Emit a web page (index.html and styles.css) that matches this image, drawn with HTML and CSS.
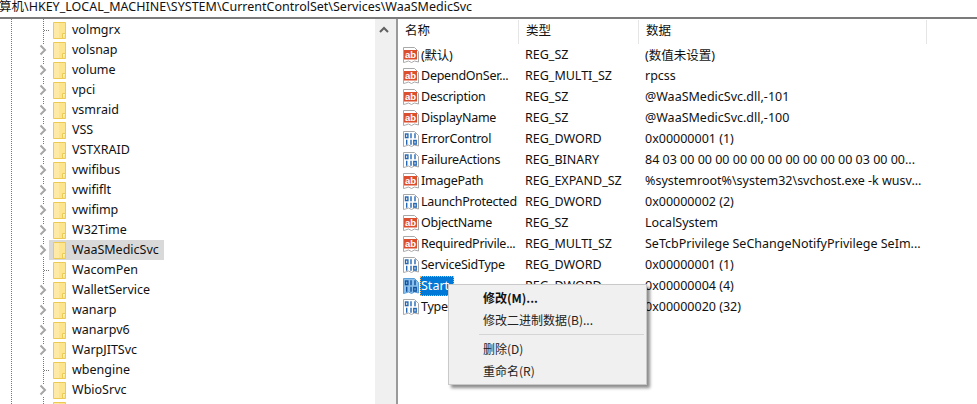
FILE: index.html
```html
<!DOCTYPE html>
<html lang="zh">
<head>
<meta charset="utf-8">
<title>注册表编辑器</title>
<link rel="stylesheet" href="styles.css">
</head>
<body>
<svg class="defs" width="0" height="0" aria-hidden="true">
  <symbol id="folder" viewBox="0 0 13 17">
    <path d="M.5.5h12v16H.5z" fill="#fde58f" stroke="#eccb55"/>
    <path d="M1 1h5v15H1z" fill="#fee9a6"/>
    <path d="M9.5 16.5v-5h3" fill="#fff3c4" stroke="#eccb55"/>
  </symbol>
  <symbol id="chev" viewBox="0 0 8 12">
    <path d="M1.5 1.5 6 6l-4.500 4.500" fill="none" stroke="#a6a6a6" stroke-width="2"/>
  </symbol>
  <symbol id="sz" viewBox="0 0 16 16">
    <path d="M.5.500h11l4 4v10.500l-4-1-3 1.500-3-1.500-3 1-2 .500z" fill="#fff" stroke="#a9a9a9"/>
    <rect x="1" y="3" width="13" height="9.500" fill="#dc4f2e"/>
    <text x="7.500" y="10.700" class="ab">ab</text>
  </symbol>
  <symbol id="bin" viewBox="0 0 16 16">
    <path d="M.5.500h11l4 4v10.500l-4-1-3 1.500-3-1.500-3 1-2 .500z" fill="#fff" stroke="#a9a9a9"/>
    <g fill="none" stroke="#2468b4" stroke-width="1.400">
      <rect x="2.500" y="3" width="2.400" height="3.600"/>
      <path d="M8 2.300v5M12 2.300v5M3.700 8.800v5M8 8.800v5"/>
      <rect x="10.800" y="9.500" width="2.400" height="3.600"/>
    </g>
  </symbol>
  <symbol id="bin-sel" viewBox="0 0 16 16">
    <path d="M.5.500h11l4 4v10.500l-4-1-3 1.500-3-1.500-3 1-2 .500z" fill="#8cc0ec" stroke="#5a9fd8"/>
    <g fill="none" stroke="#0f4f9c" stroke-width="1.400">
      <rect x="2.500" y="3" width="2.400" height="3.600"/>
      <path d="M8 2.300v5M12 2.300v5M3.700 8.800v5M8 8.800v5"/>
      <rect x="10.800" y="9.500" width="2.400" height="3.600"/>
    </g>
  </symbol>
</svg>

<div class="app">
  <div class="path">算机\HKEY_LOCAL_MACHINE\SYSTEM\CurrentControlSet\Services\WaaSMedicSvc</div>
  <div class="panes">
    <div class="tree-pane">
      <ul class="tree">
        <li class="node leaf"><span class="tw"></span><svg class="fold"><use href="#folder"/></svg><span class="lbl">volmgrx</span></li>
        <li class="node"><span class="tw"><svg class="chev"><use href="#chev"/></svg></span><svg class="fold"><use href="#folder"/></svg><span class="lbl">volsnap</span></li>
        <li class="node"><span class="tw"><svg class="chev"><use href="#chev"/></svg></span><svg class="fold"><use href="#folder"/></svg><span class="lbl">volume</span></li>
        <li class="node"><span class="tw"><svg class="chev"><use href="#chev"/></svg></span><svg class="fold"><use href="#folder"/></svg><span class="lbl">vpci</span></li>
        <li class="node"><span class="tw"><svg class="chev"><use href="#chev"/></svg></span><svg class="fold"><use href="#folder"/></svg><span class="lbl">vsmraid</span></li>
        <li class="node"><span class="tw"><svg class="chev"><use href="#chev"/></svg></span><svg class="fold"><use href="#folder"/></svg><span class="lbl">VSS</span></li>
        <li class="node"><span class="tw"><svg class="chev"><use href="#chev"/></svg></span><svg class="fold"><use href="#folder"/></svg><span class="lbl">VSTXRAID</span></li>
        <li class="node"><span class="tw"><svg class="chev"><use href="#chev"/></svg></span><svg class="fold"><use href="#folder"/></svg><span class="lbl">vwifibus</span></li>
        <li class="node"><span class="tw"><svg class="chev"><use href="#chev"/></svg></span><svg class="fold"><use href="#folder"/></svg><span class="lbl">vwififlt</span></li>
        <li class="node"><span class="tw"><svg class="chev"><use href="#chev"/></svg></span><svg class="fold"><use href="#folder"/></svg><span class="lbl">vwifimp</span></li>
        <li class="node"><span class="tw"><svg class="chev"><use href="#chev"/></svg></span><svg class="fold"><use href="#folder"/></svg><span class="lbl">W32Time</span></li>
        <li class="node sel"><span class="tw"><svg class="chev"><use href="#chev"/></svg></span><svg class="fold"><use href="#folder"/></svg><span class="lbl">WaaSMedicSvc</span></li>
        <li class="node leaf"><span class="tw"></span><svg class="fold"><use href="#folder"/></svg><span class="lbl">WacomPen</span></li>
        <li class="node"><span class="tw"><svg class="chev"><use href="#chev"/></svg></span><svg class="fold"><use href="#folder"/></svg><span class="lbl">WalletService</span></li>
        <li class="node"><span class="tw"><svg class="chev"><use href="#chev"/></svg></span><svg class="fold"><use href="#folder"/></svg><span class="lbl">wanarp</span></li>
        <li class="node"><span class="tw"><svg class="chev"><use href="#chev"/></svg></span><svg class="fold"><use href="#folder"/></svg><span class="lbl">wanarpv6</span></li>
        <li class="node"><span class="tw"><svg class="chev"><use href="#chev"/></svg></span><svg class="fold"><use href="#folder"/></svg><span class="lbl">WarpJITSvc</span></li>
        <li class="node leaf"><span class="tw"></span><svg class="fold"><use href="#folder"/></svg><span class="lbl">wbengine</span></li>
        <li class="node"><span class="tw"><svg class="chev"><use href="#chev"/></svg></span><svg class="fold"><use href="#folder"/></svg><span class="lbl">WbioSrvc</span></li>
        <li class="node"><span class="tw"></span><svg class="fold"><use href="#folder"/></svg></li>
      </ul>
      <div class="scrollbar"><svg class="up" width="10" height="7" viewBox="0 0 10 7"><path d="M1 6 5 2l4 4" fill="none" stroke="#606060" stroke-width="2"/></svg></div>
    </div>
    <div class="split"></div>
    <div class="list-pane">
      <div class="head"><span class="h h1">名称</span><span class="h h2">类型</span><span class="h h3">数据</span><span class="h h4"></span></div>
      <div class="rows">
        <div class="row"><span class="name"><svg class="ico"><use href="#sz"/></svg><span class="nm">(默认)</span></span><span class="type">REG_SZ</span><span class="data">(数值未设置)</span></div>
        <div class="row"><span class="name"><svg class="ico"><use href="#sz"/></svg><span class="nm">DependOnSer...</span></span><span class="type">REG_MULTI_SZ</span><span class="data">rpcss</span></div>
        <div class="row"><span class="name"><svg class="ico"><use href="#sz"/></svg><span class="nm">Description</span></span><span class="type">REG_SZ</span><span class="data">@WaaSMedicSvc.dll,-101</span></div>
        <div class="row"><span class="name"><svg class="ico"><use href="#sz"/></svg><span class="nm">DisplayName</span></span><span class="type">REG_SZ</span><span class="data">@WaaSMedicSvc.dll,-100</span></div>
        <div class="row"><span class="name"><svg class="ico"><use href="#bin"/></svg><span class="nm">ErrorControl</span></span><span class="type">REG_DWORD</span><span class="data">0x00000001 (1)</span></div>
        <div class="row"><span class="name"><svg class="ico"><use href="#bin"/></svg><span class="nm">FailureActions</span></span><span class="type">REG_BINARY</span><span class="data">84 03 00 00 00 00 00 00 00 00 00 00 03 00 00...</span></div>
        <div class="row"><span class="name"><svg class="ico"><use href="#sz"/></svg><span class="nm">ImagePath</span></span><span class="type">REG_EXPAND_SZ</span><span class="data">%systemroot%\system32\svchost.exe -k wusv...</span></div>
        <div class="row"><span class="name"><svg class="ico"><use href="#bin"/></svg><span class="nm">LaunchProtected</span></span><span class="type">REG_DWORD</span><span class="data">0x00000002 (2)</span></div>
        <div class="row"><span class="name"><svg class="ico"><use href="#sz"/></svg><span class="nm">ObjectName</span></span><span class="type">REG_SZ</span><span class="data">LocalSystem</span></div>
        <div class="row"><span class="name"><svg class="ico"><use href="#sz"/></svg><span class="nm">RequiredPrivile...</span></span><span class="type">REG_MULTI_SZ</span><span class="data">SeTcbPrivilege SeChangeNotifyPrivilege SeIm...</span></div>
        <div class="row"><span class="name"><svg class="ico"><use href="#bin"/></svg><span class="nm">ServiceSidType</span></span><span class="type">REG_DWORD</span><span class="data">0x00000001 (1)</span></div>
        <div class="row"><span class="name"><svg class="ico"><use href="#bin-sel"/></svg><span class="nm nm-sel">Start</span></span><span class="type">REG_DWORD</span><span class="data">0x00000004 (4)</span></div>
        <div class="row"><span class="name"><svg class="ico"><use href="#bin"/></svg><span class="nm">Type</span></span><span class="type">REG_DWORD</span><span class="data">0x00000020 (32)</span></div>
      </div>
    </div>
  </div>
  <div class="menu">
    <div class="mi strong">修改(M)...</div>
    <div class="mi">修改二进制数据(B)...</div>
    <div class="sep"></div>
    <div class="mi">删除(D)</div>
    <div class="mi">重命名(R)</div>
  </div>
</div>
</body>
</html>
```

FILE: styles.css
```css
* { box-sizing: border-box; }
html, body { margin: 0; height: 100%; overflow: hidden; background: #fff; }
body {
  font-family: "Noto Sans", "Noto Sans CJK SC", sans-serif;
  font-size: 12.5px;
  color: #111;
}
.defs { position: absolute; }
.ab { font: bold 9.5px "Liberation Sans", sans-serif; fill: #fff; text-anchor: middle; }

.app { position: relative; width: 977px; height: 404px; overflow: hidden; }

.path {
  height: 19px;
  line-height: 14px;
  font-size: 12.5px;
  white-space: nowrap;
  overflow: hidden;
  text-indent: -1px;
  border-bottom: 2px solid #7b7b7b;
}

.panes { display: flex; height: 385px; }

/* tree */
.tree-pane { width: 392px; flex: none; display: flex; overflow: hidden; }
.tree {
  list-style: none;
  margin: 0;
  padding: 1px 0 0;
  width: 375px;
  flex: none;
  background-image:
    repeating-linear-gradient(to bottom, #777 0 1px, transparent 1px 2px),
    repeating-linear-gradient(to bottom, #777 0 1px, transparent 1px 2px);
  background-size: 1px 100%, 1px 100%;
  background-position: 11px 0, 43px 0;
  background-repeat: no-repeat;
}
.node {
  height: 20px;
  display: flex;
  align-items: center;
  position: relative;
}
.tw {
  width: 53px;
  height: 20px;
  flex: none;
  display: flex;
  justify-content: flex-end;
  align-items: center;
  padding-right: 6px;
}
.chev { width: 8px; height: 12px; background: #fff; }
.leaf .tw {
  background: repeating-linear-gradient(to right, #777 0 1px, transparent 1px 2px) 44px 10px / 6px 1px no-repeat;
}
.fold { width: 13px; height: 17px; flex: none; }
.lbl { margin-left: 6px; margin-top: -1px; white-space: nowrap; }
.sel::before {
  content: "";
  position: absolute;
  left: 49px;
  top: 0;
  width: 115px;
  height: 20px;
  background: #d9d9d9;
}
.sel > * { position: relative; }
.sel .tw { background: none; }

.scrollbar {
  width: 17px;
  flex: none;
  background: #f0f0f0;
  display: flex;
  justify-content: center;
  padding-top: 5px;
  align-items: flex-start;
}
.up { display: block; margin-top: 2px; }

.split {
  width: 6px;
  flex: none;
  background: #f0f0f0;
  border-right: 2px solid #9a9a9a;
}

/* list */
.list-pane { flex: 1; min-width: 0; overflow: hidden; }
.head { height: 24px; margin-top: 1px; display: flex; }
.h {
  border-right: 1px solid #e5e5e5;
  padding-left: 7px;
  line-height: 22px;
  flex: none;
}
.h1 { width: 121px; }
.h2 { width: 120px; }
.h3 { width: 288px; }
.h4 { border: 0; }
.row { height: 21px; display: flex; align-items: center; white-space: nowrap; }
.name { width: 127px; flex: none; display: flex; align-items: center; padding-left: 5px; }
.ico { width: 16px; height: 16px; flex: none; }
.nm { margin-left: 1px; padding: 0 1px; letter-spacing: -.02em; }
.nm-sel {
  background: #0078d7;
  color: #fff;
  outline: 1px dotted #f5b26a;
  outline-offset: -1px;
  height: 20px;
  line-height: 19px;
  width: 34px;
  letter-spacing: 0;
}
.type { width: 120px; flex: none; }
.data { flex: none; }

/* context menu */
.menu {
  position: absolute;
  left: 448px;
  top: 284px;
  width: 199px;
  height: 101px;
  background: #f0f0f0;
  border: 1px solid #c9c9c9;
  box-shadow: 3px 3px 3px rgba(0, 0, 0, .45);
  padding: 2px 0 0;
  font-family: "Noto Sans CJK SC", "Noto Sans", sans-serif;
  font-size: 12px;
}
.mi { height: 22px; line-height: 21px; padding-left: 34px; color: #222; }
.strong { font-weight: 700; color: #111; }
.sep { height: 1px; background: #d5d5d5; margin: 3px 2px 3px 30px; }
```
